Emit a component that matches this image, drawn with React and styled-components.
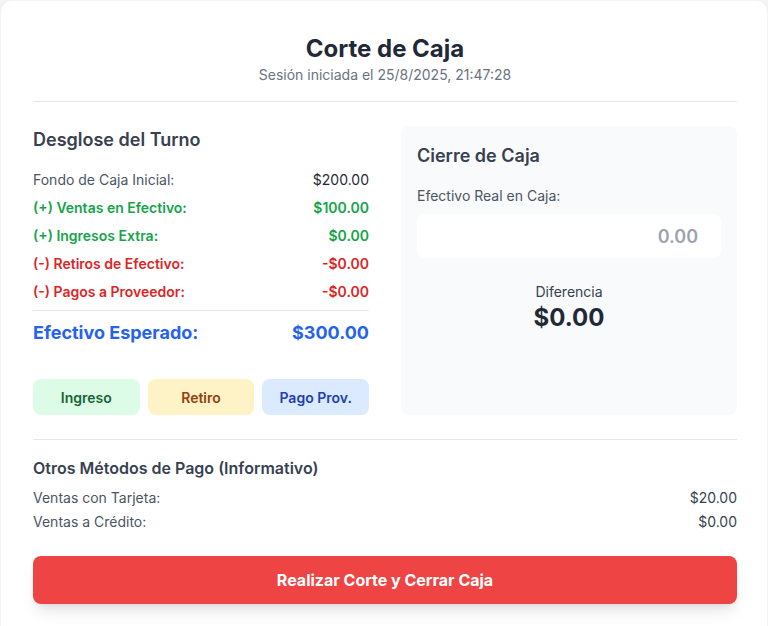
import React from "react";
import styled, { createGlobalStyle } from "styled-components";

const Global = createGlobalStyle`
  * { box-sizing: border-box; }
  body {
    margin: 0;
    background: #f3f4f6;
    font-family: Inter, "Noto Sans", Arial, sans-serif;
    color: #1f2937;
  }
`;

const Card = styled.div`
  width: 768px;
  background: #ffffff;
  border: 1px solid #f3f4f6;
  border-radius: 12px;
  box-shadow: 0 1px 3px rgba(0, 0, 0, 0.06);
  padding: 32px 30px 32px 32px;
`;

const Header = styled.header`
  text-align: center;
  padding-bottom: 16px;
  border-bottom: 1px solid #e5e7eb;
`;

const Title = styled.h1`
  margin: 0;
  font-size: 24px;
  line-height: 32px;
  font-weight: 700;
  color: #1f2937;
`;

const Subtitle = styled.p`
  margin: 0;
  font-size: 14px;
  line-height: 20px;
  color: #6b7280;
`;

const Grid = styled.div`
  display: grid;
  grid-template-columns: 1fr 1fr;
  gap: 32px;
  margin-top: 24px;
`;

const Column = styled.section`
  display: flex;
  flex-direction: column;
`;

const SectionTitle = styled.h2`
  margin: 0 0 ${(p) => p.$mb || 16}px;
  font-size: ${(p) => p.$size || 18}px;
  line-height: ${(p) => (p.$size === 16 ? 24 : 28)}px;
  font-weight: 600;
  color: #374151;
`;

const Rows = styled.div`
  display: flex;
  flex-direction: column;
  gap: ${(p) => p.$gap}px;
`;

const tones = {
  plain: { label: "#4b5563", value: "#1f2937", weight: 400 },
  plus: { label: "#16a34a", value: "#16a34a", weight: 600 },
  minus: { label: "#dc2626", value: "#dc2626", weight: 600 },
  info: { label: "#4b5563", value: "#374151", weight: 400 },
};

const Row = styled.div`
  display: flex;
  justify-content: space-between;
  font-size: 14px;
  line-height: 20px;
  font-weight: ${(p) => tones[p.$tone].weight};
  color: ${(p) => tones[p.$tone].label};
  & > span:last-child {
    color: ${(p) => tones[p.$tone].value};
  }
`;

const TotalRow = styled.div`
  display: flex;
  justify-content: space-between;
  border-top: 1px solid #e5e7eb;
  padding-top: 8px;
  font-size: 18px;
  line-height: 28px;
  font-weight: 700;
  color: #2563eb;
`;

const Actions = styled.div`
  display: grid;
  grid-template-columns: repeat(3, 1fr);
  gap: 8px;
  margin-top: 32px;
`;

const actionTones = {
  green: { bg: "#dcfce7", fg: "#166534" },
  yellow: { bg: "#fef3c7", fg: "#92400e" },
  blue: { bg: "#dbeafe", fg: "#1e40af" },
};

const ActionButton = styled.button`
  height: 36px;
  border: none;
  border-radius: 8px;
  font-family: inherit;
  font-size: 14px;
  font-weight: 600;
  cursor: pointer;
  background: ${(p) => actionTones[p.$tone].bg};
  color: ${(p) => actionTones[p.$tone].fg};
`;

const Panel = styled.section`
  background: #f9fafb;
  border-radius: 8px;
  padding: 16px;
  display: flex;
  flex-direction: column;
`;

const Label = styled.label`
  font-size: 14px;
  line-height: 20px;
  color: #4b5563;
  margin-bottom: 8px;
`;

const AmountInput = styled.input`
  height: 44px;
  width: 100%;
  border: none;
  border-radius: 8px;
  background: #ffffff;
  padding: 0 23px 0 12px;
  text-align: right;
  font-family: inherit;
  font-size: 18px;
  font-weight: 600;
  color: #1f2937;
  outline: none;
  &::placeholder {
    color: #9ca3af;
  }
`;

const Difference = styled.div`
  margin-top: 24px;
  text-align: center;
`;

const DiffLabel = styled.div`
  font-size: 14px;
  line-height: 20px;
  color: #374151;
`;

const DiffValue = styled.div`
  font-size: 24px;
  line-height: 32px;
  font-weight: 700;
  color: #1f2937;
`;

const Others = styled.section`
  margin-top: 24px;
  padding-top: 16px;
  border-top: 1px solid #e5e7eb;
`;

const CloseButton = styled.button`
  display: block;
  width: 100%;
  height: 48px;
  margin-top: 24px;
  border: none;
  border-radius: 8px;
  background: #ef4444;
  color: #ffffff;
  font-family: inherit;
  font-size: 16px;
  font-weight: 700;
  cursor: pointer;
  box-shadow: 0 10px 15px -3px rgba(0, 0, 0, 0.1), 0 4px 6px -4px rgba(0, 0, 0, 0.1);
`;

export default function App() {
  return (
    <>
      <Global />
      <Card>
        <Header>
          <Title>Corte de Caja</Title>
          <Subtitle>Sesión iniciada el 25/8/2025, 21:47:28</Subtitle>
        </Header>
        <Grid>
          <Column>
            <SectionTitle>Desglose del Turno</SectionTitle>
            <Rows $gap={8}>
              <Row $tone="plain"><span>Fondo de Caja Inicial:</span><span>$200.00</span></Row>
              <Row $tone="plus"><span>(+) Ventas en Efectivo:</span><span>$100.00</span></Row>
              <Row $tone="plus"><span>(+) Ingresos Extra:</span><span>$0.00</span></Row>
              <Row $tone="minus"><span>(-) Retiros de Efectivo:</span><span>-$0.00</span></Row>
              <Row $tone="minus"><span>(-) Pagos a Proveedor:</span><span>-$0.00</span></Row>
              <TotalRow><span>Efectivo Esperado:</span><span>$300.00</span></TotalRow>
            </Rows>
            <Actions>
              <ActionButton $tone="green">Ingreso</ActionButton>
              <ActionButton $tone="yellow">Retiro</ActionButton>
              <ActionButton $tone="blue">Pago Prov.</ActionButton>
            </Actions>
          </Column>
          <Panel>
            <SectionTitle>Cierre de Caja</SectionTitle>
            <Label htmlFor="real">Efectivo Real en Caja:</Label>
            <AmountInput id="real" type="text" placeholder="0.00" />
            <Difference>
              <DiffLabel>Diferencia</DiffLabel>
              <DiffValue>$0.00</DiffValue>
            </Difference>
          </Panel>
        </Grid>
        <Others>
          <SectionTitle $size={16} $mb={8}>Otros Métodos de Pago (Informativo)</SectionTitle>
          <Rows $gap={4}>
            <Row $tone="info"><span>Ventas con Tarjeta:</span><span>$20.00</span></Row>
            <Row $tone="info"><span>Ventas a Crédito:</span><span>$0.00</span></Row>
          </Rows>
        </Others>
        <CloseButton>Realizar Corte y Cerrar Caja</CloseButton>
      </Card>
    </>
  );
}
